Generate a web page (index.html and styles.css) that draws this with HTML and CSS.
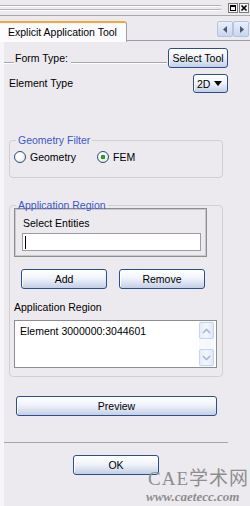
FILE: index.html
```html
<!DOCTYPE html>
<html lang="en">
<head>
    <meta charset="UTF-8">
    <title>Explicit Application Tool</title>
    <link rel="stylesheet" href="styles.css">
</head>
<body>

    <div class="title-bar">
        <div class="grip"></div>
        <div class="win-btn">
            <svg width="10" height="10" viewBox="0 0 10 10"><rect x="0.5" y="0.5" width="9" height="9" fill="#f4f4f4" stroke="#7a7a7a"/><rect x="2.5" y="2.5" width="5" height="5" fill="none" stroke="#000"/><rect x="2" y="2" width="6" height="2" fill="#000"/></svg>
        </div>
        <div class="win-btn">
            <svg width="10" height="10" viewBox="0 0 10 10"><rect x="0.5" y="0.5" width="9" height="9" fill="#f4f4f4" stroke="#7a7a7a"/><path d="M2.5 2.5 L7.5 7.5 M7.5 2.5 L2.5 7.5" stroke="#000" stroke-width="1.6"/></svg>
        </div>
    </div>

    <div class="tab-strip">
        <div class="tab">Explicit Application Tool</div>
        <div class="tab-space">
            <div class="tab-nav">
                <div class="nav-btn"><svg width="5" height="7" viewBox="0 0 5 7"><path d="M4 0 L0 3.5 L4 7 Z" fill="#4b5a78"/></svg></div>
                <div class="nav-btn"><svg width="5" height="7" viewBox="0 0 5 7"><path d="M1 0 L5 3.5 L1 7 Z" fill="#4b5a78"/></svg></div>
            </div>
        </div>
    </div>

    <div class="panel">
        <div class="form-row">
            <div class="etch short"></div>
            <span class="form-label">Form Type:</span>
            <div class="etch long"></div>
            <button class="xp-btn select-tool">Select Tool</button>
        </div>

        <div class="element-row">
            <span>Element Type</span>
            <button class="xp-btn combo">2D <span class="caret-down"></span></button>
        </div>

        <fieldset class="group geometry">
            <legend>Geometry Filter</legend>
            <div class="radio-row">
                <label class="radio-item"><span class="radio"></span>Geometry</label>
                <label class="radio-item"><span class="radio checked"></span>FEM</label>
            </div>
        </fieldset>

        <fieldset class="group app-region">
            <legend>Application Region</legend>
            <div class="select-box">
                <div class="select-title">Select Entities</div>
                <div class="text-input"><span class="text-caret"></span></div>
            </div>
            <div class="add-remove">
                <button class="xp-btn half">Add</button>
                <button class="xp-btn half">Remove</button>
            </div>
            <div class="list-label">Application Region</div>
            <div class="listbox">
                <div class="list-item">Element 3000000:3044601</div>
                <div class="scroll">
                    <div class="scroll-btn"><svg width="9" height="6" viewBox="0 0 9 6"><path d="M1 5 L4.5 1.5 L8 5" fill="none" stroke="#a9b8d8" stroke-width="1.6"/></svg></div>
                    <div class="scroll-btn"><svg width="9" height="6" viewBox="0 0 9 6"><path d="M1 1 L4.5 4.5 L8 1" fill="none" stroke="#a9b8d8" stroke-width="1.6"/></svg></div>
                </div>
            </div>
        </fieldset>

        <button class="xp-btn preview">Preview</button>

        <div class="separator"></div>

        <button class="xp-btn ok">OK</button>
    </div>

    <div class="watermark">
        <div class="wm-title">CAE学术网</div>
        <div class="wm-url">www.caetecc.com</div>
    </div>

</body>
</html>
```

FILE: styles.css
```css
body {
    margin: 0;
    width: 250px;
    height: 506px;
    overflow: hidden;
    position: relative;
    background-color: #eceaef;
    font-family: "Liberation Sans", Arial, sans-serif;
    font-size: 10.5px;
    line-height: 13px;
    color: #000;
}

/* top strip with grip and window buttons */
.title-bar {
    display: flex;
    align-items: center;
    height: 15px;
    border-bottom: 1px solid #a9a9ad;
}

.grip {
    width: 222px;
    height: 3px;
    border-top: 1px solid #b4b4b8;
    border-bottom: 1px solid #b4b4b8;
    box-shadow: 0 1px 0 #fff, inset 0 1px 0 #fff;
    border-radius: 0 2px 2px 0;
    margin-right: 6px;
}

.win-btn {
    display: flex;
    width: 10px;
    height: 10px;
    margin-right: 1px;
}

/* tab row */
.tab-strip {
    display: flex;
    align-items: flex-end;
    height: 25px;
}

.tab {
    width: 118px;
    height: 19px;
    padding-left: 8px;
    background-color: #fcfcfe;
    border-top: 2px solid #f4a73a;
    border-right: 1px solid #9aa0a8;
    border-top-right-radius: 3px;
    margin-bottom: -1px;
    display: flex;
    align-items: center;
    font-size: 10.5px;
    position: relative;
    z-index: 1;
}

.tab-space {
    flex: 1;
    height: 100%;
    border-bottom: 1px solid #9aa0a8;
    display: flex;
    justify-content: flex-end;
}

.tab-nav {
    display: flex;
    margin-top: 6px;
    height: 16px;
    margin-right: 1px;
}

.nav-btn {
    width: 14px;
    height: 14px;
    border: 1px solid #b3c3e2;
    border-radius: 2px;
    background: linear-gradient(#e9eff9, #c8d6ee);
    display: flex;
    align-items: center;
    justify-content: center;
}

/* main panel */
.panel {
    border-left: 4px solid #f6f5fa;
    padding: 7px 22px 0 0;
    height: 464px;
}

.form-row {
    display: flex;
    align-items: center;
    height: 20px;
}

.etch {
    align-self: flex-end;
    margin-bottom: 4px;
    height: 0;
    border-top: 1px solid #a6a6aa;
    border-bottom: 1px solid #fff;
}

.etch.short {
    width: 10px;
}

.etch.long {
    flex: 1;
    margin-left: 3px;
    margin-right: 1px;
}

.form-label {
    margin-left: 1px;
}

.xp-btn {
    font-family: "Liberation Sans", Arial, sans-serif;
    font-size: 10.5px;
    color: #000;
    height: 20px;
    padding: 0;
    border: 1px solid #2b4f8c;
    border-radius: 3px;
    background: linear-gradient(#ffffff, #f0f3f9 45%, #c4cfe6);
    box-shadow: inset 1px 1px 0 #fff;
}

.select-tool {
    width: 60px;
}

.element-row {
    display: flex;
    align-items: center;
    justify-content: space-between;
    margin-top: 6px;
    padding-left: 5px;
    height: 19px;
}

.combo {
    width: 35px;
    height: 19px;
    display: flex;
    align-items: center;
    padding-left: 3px;
    gap: 4px;
}

.caret-down {
    width: 0;
    height: 0;
    border-left: 4px solid transparent;
    border-right: 4px solid transparent;
    border-top: 5px solid #000;
}

/* group boxes */
.group {
    margin: 0 5px;
    padding: 0 4px;
    border: 1px solid #d2d0cc;
    border-radius: 4px;
}

.group legend {
    padding: 0 2px;
    margin-left: 2px;
    color: #3858c8;
    line-height: 13px;
}

.geometry {
    margin-top: 41px;
    padding-top: 4px;
    padding-bottom: 14px;
}

.radio-row {
    display: flex;
    height: 12px;
    align-items: center;
}

.radio-item {
    display: flex;
    align-items: center;
    gap: 4px;
    line-height: 12px;
}

.radio-item:first-child {
    width: 83px;
}

.radio {
    width: 10px;
    height: 10px;
    border: 1px solid #2a4a78;
    border-radius: 50%;
    background: radial-gradient(circle at 35% 35%, #fff 30%, #dcdcd8);
}

.radio.checked {
    background: radial-gradient(circle, #38b038 0, #1f8f1f 2px, transparent 2.6px),
                radial-gradient(circle at 35% 35%, #fff 30%, #dcdcd8);
}

.app-region {
    margin-top: 21px;
    padding-top: 0;
    padding-bottom: 8px;
}

.select-box {
    width: 179px;
    margin-top: -4px;
    padding: 8px 5px 5px 7px;
    border: 1px solid #8e8e92;
    box-shadow: inset 0 0 0 1px #c9c8cc;
}

.select-title {
    padding-left: 1px;
}

.text-input {
    margin-top: 3px;
    height: 16px;
    border: 1px solid #9d9da1;
    background-color: #fff;
    display: flex;
    align-items: center;
    padding-left: 2px;
}

.text-caret {
    height: 13px;
    border-left: 1px solid #000;
}

.add-remove {
    display: flex;
    gap: 12px;
    margin-top: 12px;
    padding-left: 7px;
}

.half {
    width: 86px;
}

.list-label {
    margin-top: 12px;
}

.listbox {
    margin-top: 6px;
    width: 201px;
    height: 46px;
    border: 1px solid #8e8e92;
    background-color: #fff;
    display: flex;
    justify-content: space-between;
}

.list-item {
    padding: 4px 0 0 5px;
}

.scroll {
    width: 15px;
    margin-right: 2px;
    padding: 1px 0;
    display: flex;
    flex-direction: column;
    justify-content: space-between;
    background-color: #f7f8fc;
}

.scroll-btn {
    height: 15px;
    border: 1px solid #c7d4ee;
    border-radius: 2px;
    background: linear-gradient(90deg, #e6edfa, #f3f6fd 50%, #dfe7f7);
    display: flex;
    align-items: center;
    justify-content: center;
    box-sizing: border-box;
    height: 17px;
}

.preview {
    display: block;
    margin: 19px 0 0 12px;
    width: 201px;
}

.separator {
    margin-top: 26px;
    border-top: 1px solid #a4a4a8;
}

.ok {
    display: block;
    margin: 12px 0 0 69px;
    width: 86px;
}

/* watermark over the bottom corner */
.watermark {
    position: absolute;
    left: 146px;
    top: 469px;
    color: #8e8e8e;
    font-family: "Liberation Serif", "Noto Sans CJK SC", serif;
    line-height: 1;
}

.wm-title {
    font-size: 19px;
    letter-spacing: 1px;
    padding-left: 2px;
}

.wm-url {
    font-size: 13px;
    font-style: italic;
    font-weight: bold;
    margin-top: 2px;
}
```
